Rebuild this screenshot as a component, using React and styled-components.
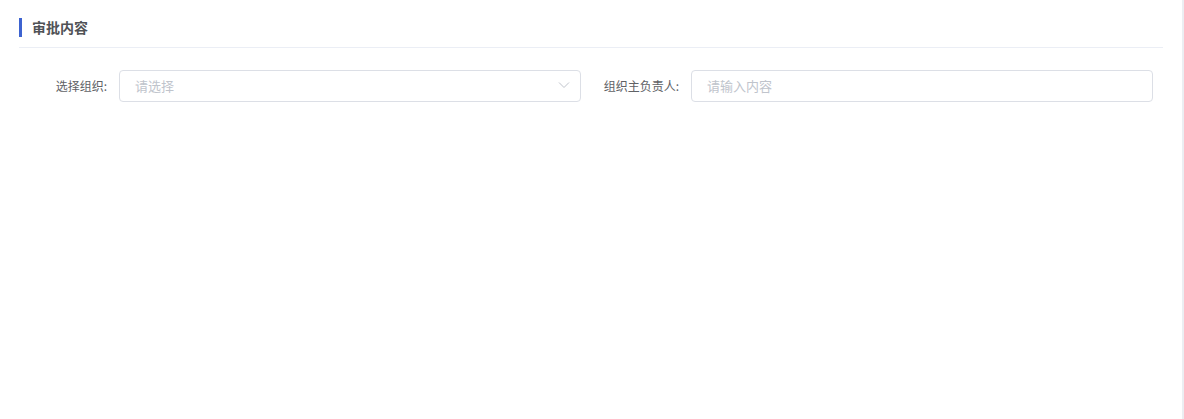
import styled, { createGlobalStyle } from "styled-components";

const Global = createGlobalStyle`
  body {
    margin: 0;
    background: #ffffff;
    font-family: "Liberation Sans", "Noto Sans CJK SC", sans-serif;
  }
`;

export default function App() {
  return (
    <>
      <Global />
      <Page>
        <Header>
          <Title>审批内容</Title>
        </Header>
        <FormRow>
          <Item>
            <Label>选择组织:</Label>
            <Select>
              <span>请选择</span>
              <svg width="12" height="12" viewBox="0 0 12 12">
                <path d="M1 3.5 L6 8.5 L11 3.5" fill="none" stroke="#c0c4cc" strokeWidth="1" />
              </svg>
            </Select>
          </Item>
          <Item>
            <Label>组织主负责人:</Label>
            <Input placeholder="请输入内容" />
          </Item>
        </FormRow>
      </Page>
    </>
  );
}

const Page = styled.div`
  width: 1184px;
  min-height: 419px;
  box-sizing: border-box;
  padding: 18px 19px 0 19px;
  background: #ffffff;
  border-right: 2px solid #eceef2;
`;

const Header = styled.div`
  padding-bottom: 10px;
  border-bottom: 1px solid #ebeef5;
`;

const Title = styled.div`
  height: 19px;
  line-height: 18px;
  border-left: 3px solid #3d63d0;
  padding-left: 10px;
  font-size: 14px;
  font-weight: 700;
  color: #505256;
  font-family: "Noto Sans CJK SC", sans-serif;
`;

const FormRow = styled.div`
  display: grid;
  grid-template-columns: 1fr 1fr;
  margin-top: 22px;
`;

const Item = styled.div`
  display: flex;
  align-items: center;
  padding-right: 10px;
`;

const Label = styled.label`
  width: 100px;
  flex-shrink: 0;
  box-sizing: border-box;
  padding-right: 12px;
  padding-bottom: 2px;
  text-align: right;
  font-size: 12px;
  color: #606266;
  font-family: "Noto Sans CJK SC", sans-serif;
`;

const Select = styled.div`
  flex: 1;
  height: 32px;
  box-sizing: border-box;
  border: 1px solid #dcdfe6;
  border-radius: 4px;
  background: #fff;
  display: flex;
  align-items: center;
  justify-content: space-between;
  padding: 0 10px 2px 15px;
  font-size: 13px;
  color: #c0c4cc;
  font-family: "Noto Sans CJK SC", sans-serif;
`;

const Input = styled.input`
  flex: 1;
  min-width: 0;
  height: 32px;
  box-sizing: border-box;
  border: 1px solid #dcdfe6;
  border-radius: 4px;
  background: #fff;
  padding: 0 15px 2px 15px;
  font-size: 13px;
  font-family: "Noto Sans CJK SC", sans-serif;
  outline: none;
  &::placeholder {
    color: #c0c4cc;
  }
`;
